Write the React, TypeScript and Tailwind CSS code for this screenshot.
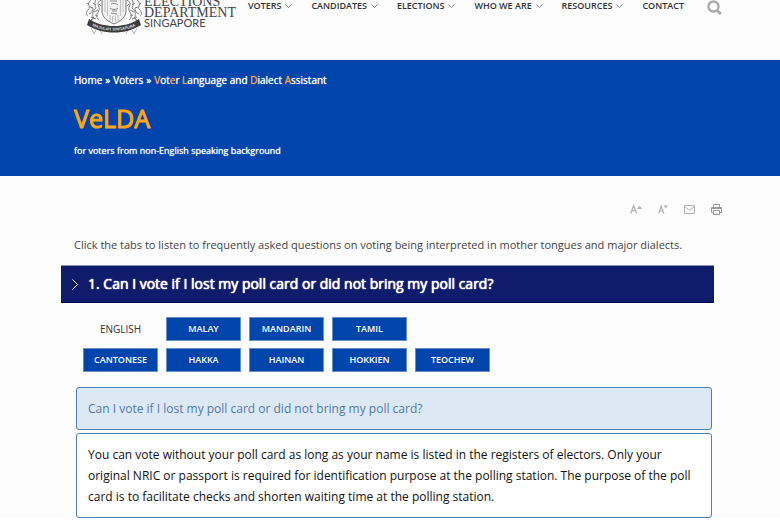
import React from 'react'

type NavItem = {
  label: string
  hasMenu: boolean
}

const navItems: NavItem[] = [
  { label: 'VOTERS', hasMenu: true },
  { label: 'CANDIDATES', hasMenu: true },
  { label: 'ELECTIONS', hasMenu: true },
  { label: 'WHO WE ARE', hasMenu: true },
  { label: 'RESOURCES', hasMenu: true },
  { label: 'CONTACT', hasMenu: false },
]

const languageRows = [
  ['ENGLISH', 'MALAY', 'MANDARIN', 'TAMIL'],
  ['CANTONESE', 'HAKKA', 'HAINAN', 'HOKKIEN', 'TEOCHEW'],
]

const Chevron = () => (
  <svg className="h-1 w-[7px]" viewBox="0 0 7 4" fill="none" stroke="#777" strokeWidth="0.9">
    <path d="M0.4 0.4 3.5 3.5 6.6 0.4" />
  </svg>
)

const Lion = () => (
  <g fill="none" stroke="#808080" strokeWidth="1">
    <path d="M16 0C13 2 12 4 14 7c1 3-1 5-2 7s0 5 2 6" />
    <path d="M11 0c-2 3-1 6 0 8-3 2-4 6-3 9 1 2-1 4-3 4" />
    <path d="M6 0C4 1 3 3 4 6c1 2 0 3-1 4M3 10c-2 2-2 5 0 6M4 14c3-1 4-4 4-6" />
    <path d="M8 3l3 2M13 10l-4 2M6 17l5 2M14 4l2 2M10 15l3 1" />
    <path d="M5 7l3 1M2 3l2 2M6 20l3-3" />
  </g>
)

const Crest = () => (
  <svg className="h-9 w-[58px] shrink-0" viewBox="0 0 58 36" aria-hidden="true">
    <Lion />
    <g transform="translate(58 0) scale(-1 1)">
      <Lion />
    </g>
    <path d="M17 0v11c0 6 5 10 12 13 7-3 12-7 12-13V0" fill="#f2f2f2" stroke="#777" />
    <path
      d="M20 0v12M22.5 0v16M35.5 0v16M38 0v12M25 15v6M27.5 16v6M30.5 16v6M33 15v6"
      stroke="#b5b5b5"
      strokeWidth="0.8"
    />
    <path
      d="M25 1h7M26 4c2-1 5-1 7 1M25 8c2 2 6 2 8 0M27 11h5M26 13l6 1"
      fill="none"
      stroke="#8a8a8a"
    />
    <path d="M6 28l3 6 2-4M52 28l-3 6-2-4M15 30l2 4M43 30l-2 4" fill="none" stroke="#b5b5b5" />
    <path
      d="M4 19c8 5 16 7 25 7s17-2 25-7l2 6c-8 5-17 7.500-27 7.500S10 30 2 25z"
      fill="#3c3c3c"
    />
    <path id="motto" d="M5 25c8 4 15 5.500 24 5.500s16-1.500 24-5.500" fill="none" />
    <text fontFamily="Liberation Sans" fontSize="4" fontWeight="700" fill="#ddd">
      <textPath href="#motto" startOffset="50%" textAnchor="middle">
        MAJULAH SINGAPURA
      </textPath>
    </text>
  </svg>
)

const Logo = () => (
  <a href="#" className="flex items-end text-[#444]">
    <Crest />
    <span className="mb-2 ml-px flex flex-col">
      <span className="-mt-4 font-['Liberation_Serif',serif] text-sm leading-[11px]">
        <span className="block">ELECTIONS</span>
        <span className="block">DEPARTMENT</span>
      </span>
      <span className="font-[Lato,sans-serif] text-[11px] leading-[10px]">SINGAPORE</span>
    </span>
  </a>
)

const Header = () => (
  <header className="flex h-[60px] items-start overflow-hidden pr-[58px] pl-[85px]">
    <Logo />
    <nav className="ml-3 flex flex-1 justify-between text-[9px] leading-3 font-semibold text-[#333]">
      {navItems.map((item) => (
        <a key={item.label} href="#" className="flex h-3 items-center gap-1 whitespace-nowrap">
          {item.label}
          {item.hasMenu && <Chevron />}
        </a>
      ))}
      <button type="button" aria-label="Search" className="ml-1 h-[15px]">
        <svg className="size-[15px]" viewBox="0 0 15 15" fill="none" stroke="#aaa" strokeWidth="2.4">
          <circle cx="6.5" cy="6.5" r="5" />
          <path d="M10 10.5 14 14" strokeWidth="2.8" />
        </svg>
      </button>
    </nav>
  </header>
)

const Banner = () => (
  <section className="border-t border-[#0038a0] bg-[#0045ab] px-[74px] pt-[11px] pb-4 text-white">
    <nav className="flex gap-[3px] text-[10px] leading-4 [text-shadow:0_0_1px_currentColor]">
      <a href="#">Home</a>
      <span>»</span>
      <a href="#">Voters</a>
      <span>»</span>
      <span>
        <span className="text-[#f7a14a]">V</span>ot<span className="text-[#f7a14a]">e</span>r{' '}
        <span className="text-[#f7a14a]">L</span>anguage and{' '}
        <span className="text-[#f7a14a]">D</span>ialect <span className="text-[#f7a14a]">A</span>ssistant
      </span>
    </nav>
    <h1 className="mt-3 text-[25px] leading-9 text-[#ffa616] [-webkit-text-stroke:1px_currentColor]">VeLDA</h1>
    <p className="mt-[7px] mb-px text-[9px] leading-4 [text-shadow:0_0_1px_currentColor]">
      for voters from non-English speaking background
    </p>
  </section>
)

const Toolbar = () => (
  <div className="flex items-center justify-end gap-4 pr-[58px] text-[#b4b4b4]">
    <button type="button" aria-label="Increase text size">
      <svg className="h-[11px] w-3" viewBox="0 0 12 11" fill="none" stroke="currentColor" strokeWidth="1.3">
        <path d="M0.7 9.5 3.7 1.5 6.7 9.5M1.7 6.7h4" />
        <path d="M7 5 9.5 1.5 12 5z" fill="currentColor" stroke="none" />
      </svg>
    </button>
    <button type="button" aria-label="Decrease text size">
      <svg className="h-[11px] w-[10px]" viewBox="0 0 10 11" fill="none" stroke="currentColor" strokeWidth="1.2">
        <path d="M0.7 9.5 3.2 2 5.7 9.5M1.5 7h3.5" />
        <path d="M5.5 1.5 7.7 4.5 10 1.5z" fill="currentColor" stroke="none" />
      </svg>
    </button>
    <button type="button" aria-label="Email this page">
      <svg className="h-[9px] w-[11px]" viewBox="0 0 11 9" fill="none" stroke="currentColor">
        <path d="M0.5 0.5h10v8h-10zM0.5 1.5 5.5 5 10.5 1.5" />
      </svg>
    </button>
    <button type="button" aria-label="Print" className="text-[#999]">
      <svg className="h-[11px] w-[11px]" viewBox="0 0 11 11" fill="none" stroke="currentColor">
        <path d="M2.5 3.5v-3h6v3M2.5 8.5h-2v-5h10v5h-2M2.5 6.5h6v4h-6zM1 4.5h9" />
      </svg>
    </button>
  </div>
)

const LanguageTabs = () => (
  <div className="mt-[14px] ml-[83px] flex flex-col gap-[7px]">
    {languageRows.map((row) => (
      <div key={row[0]} className="flex gap-2">
        {row.map((language) => (
          <button
            key={language}
            type="button"
            className={
              language === 'ENGLISH'
                ? 'h-6 w-[75px] text-[10px] leading-4 text-[#333]'
                : 'h-6 w-[75px] border border-[#6a8fc4] bg-[#0045ab] text-[9px] leading-4 font-semibold text-white'
            }
          >
            {language}
          </button>
        ))}
      </div>
    ))}
  </div>
)

const App = () => {
  return (
    <div className="bg-[#fdfdfd] font-['Open_Sans',sans-serif]">
      <Header />
      <Banner />
      <main className="pt-7">
        <Toolbar />
        <p className="mt-5 ml-[74px] text-[11px] leading-5 text-[#444]">
          Click the tabs to listen to frequently asked questions on voting being interpreted in mother tongues and
          major dialects.
        </p>
        <h2 className="mt-[10px] mr-[66px] ml-[61px]">
          <button
            type="button"
            className="flex h-[38px] w-full items-center gap-[10px] border-t border-b border-t-[#8c8fae] border-b-[#00004e] bg-[#0f1c6b] pl-[11px] text-sm text-white"
          >
            <svg className="h-[11px] w-[6px]" viewBox="0 0 6 11" fill="none" stroke="currentColor">
              <path d="M0.5 0.5 5.5 5.5 0.5 10.5" />
            </svg>
            <span className="[text-shadow:0_0_1px_currentColor,0_0_1px_currentColor]">
              1. Can I vote if I lost my poll card or did not bring my poll card?
            </span>
          </button>
        </h2>
        <LanguageTabs />
        <div className="mt-[15px] mr-[68px] ml-[76px] flex flex-col gap-[3px] text-xs leading-[21px]">
          <p className="rounded-[3px] border border-[#4f81b0] bg-[#dce9f5] px-[11px] py-[10px] text-[#5379a3]">
            Can I vote if I lost my poll card or did not bring my poll card?
          </p>
          <p className="rounded-[3px] border border-[#4f81b0] bg-white px-[11px] py-[10px] text-[#111]">
            You can vote without your poll card as long as your name is listed in the registers of electors. Only your
            original NRIC or passport is required for identification purpose at the polling station. The purpose of the
            poll card is to facilitate checks and shorten waiting time at the polling station.
          </p>
        </div>
      </main>
    </div>
  )
}

export default App
